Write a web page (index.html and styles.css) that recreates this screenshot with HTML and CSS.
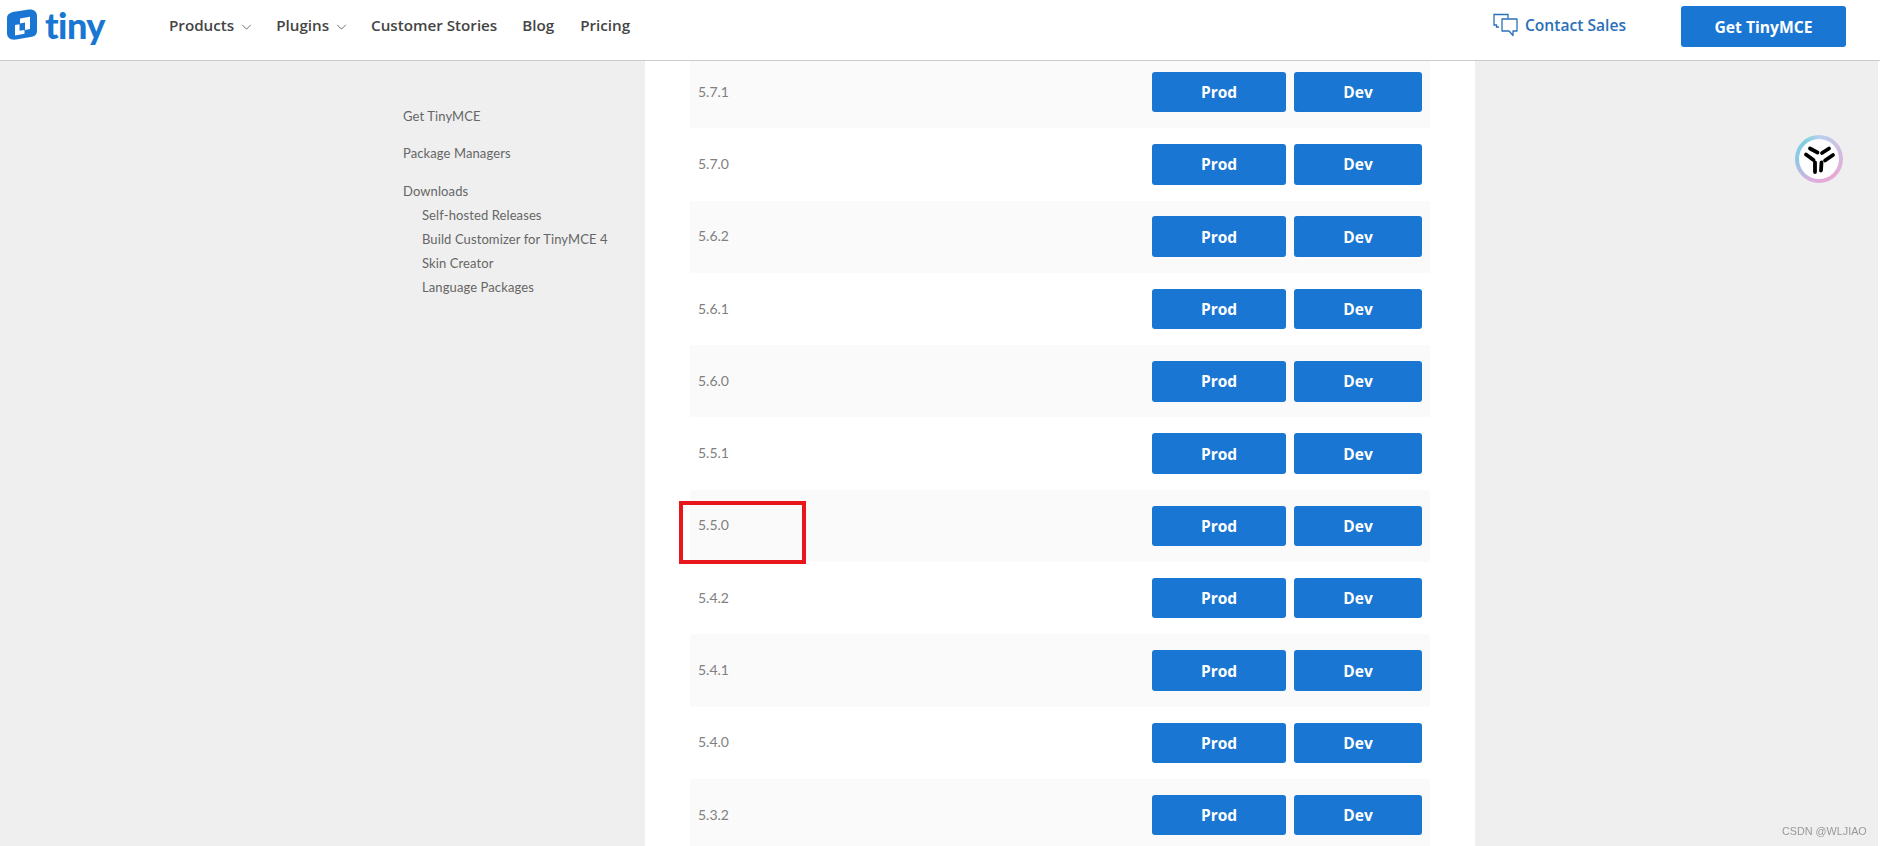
FILE: index.html
```html
<!DOCTYPE html>
<html lang="en">
<head>
  <meta charset="UTF-8" />
  <meta name="viewport" content="width=device-width, initial-scale=1.0" />
  <title>TinyMCE Downloads</title>
  <link rel="stylesheet" href="styles.css">
</head>
<body>
<header class="topbar">
  <a class="logo">
    <svg class="logo-mark" viewBox="0 0 30 31" width="30" height="31">
      <path d="M9 2.5 L22 .6 C26.5 0 30 2.5 30 7 L30 22 C30 25 28.5 27 25 27.8 L9 30.6 C3.5 31.4 0 28.5 0 24 L0 9 C0 5.5 3 3.3 9 2.5 Z" fill="#1976d2"/>
      <path d="M13 9.5 L23 7.8 L23 20 L18 20.9 L18 13.6 L13 14.5 Z" fill="#fff"/>
      <path d="M8 16 L12.5 15.2 L12.5 21.8 L17.5 21 L17.5 24.8 L8 26.4 Z" fill="#fff"/>
    </svg>
    <span class="logo-text">tiny</span>
  </a>
  <nav class="mainnav">
    <a class="nav-products">Products <svg class="caret" viewBox="0 0 12 7" width="11" height="6"><path d="M1 1 L6 6 L11 1" fill="none" stroke="#555" stroke-width="1"/></svg></a>
    <a class="nav-plugins">Plugins <svg class="caret" viewBox="0 0 12 7" width="11" height="6"><path d="M1 1 L6 6 L11 1" fill="none" stroke="#555" stroke-width="1"/></svg></a>
    <a>Customer Stories</a>
    <a class="nav-blog">Blog</a>
    <a class="nav-pricing">Pricing</a>
  </nav>
  <a class="contact">
    <svg viewBox="0 0 25 24" width="25" height="24">
      <path d="M6 14 L3.5 14 L3.5 12 L1 12 L1 1.5 L15 1.5 L15 5.5" fill="none" stroke="#2a70b8" stroke-width="1.3"/>
      <path d="M9 6 L24 6 L24 18 L20 18 L20 22.5 L16 18 L9 18 Z" fill="none" stroke="#2a70b8" stroke-width="1.3" stroke-linejoin="round"/>
    </svg>
    Contact Sales
  </a>
  <a class="get-btn">Get TinyMCE</a>
</header>

<div class="page">
  <aside class="sidebar">
    <a class="side-link">Get TinyMCE</a>
    <a class="side-link">Package Managers</a>
    <a class="side-link side-parent">Downloads</a>
    <a class="side-sub">Self-hosted Releases</a>
    <a class="side-sub">Build Customizer for TinyMCE 4</a>
    <a class="side-sub">Skin Creator</a>
    <a class="side-sub">Language Packages</a>
  </aside>

  <main class="content">
    <div class="row"><span class="ver">5.7.1</span><a class="btn btn-prod">Prod</a><a class="btn btn-dev">Dev</a></div>
    <div class="row"><span class="ver">5.7.0</span><a class="btn btn-prod">Prod</a><a class="btn btn-dev">Dev</a></div>
    <div class="row"><span class="ver">5.6.2</span><a class="btn btn-prod">Prod</a><a class="btn btn-dev">Dev</a></div>
    <div class="row"><span class="ver">5.6.1</span><a class="btn btn-prod">Prod</a><a class="btn btn-dev">Dev</a></div>
    <div class="row"><span class="ver">5.6.0</span><a class="btn btn-prod">Prod</a><a class="btn btn-dev">Dev</a></div>
    <div class="row"><span class="ver">5.5.1</span><a class="btn btn-prod">Prod</a><a class="btn btn-dev">Dev</a></div>
    <div class="row"><span class="ver">5.5.0</span><a class="btn btn-prod">Prod</a><a class="btn btn-dev">Dev</a><div class="red-box"></div></div>
    <div class="row"><span class="ver">5.4.2</span><a class="btn btn-prod">Prod</a><a class="btn btn-dev">Dev</a></div>
    <div class="row"><span class="ver">5.4.1</span><a class="btn btn-prod">Prod</a><a class="btn btn-dev">Dev</a></div>
    <div class="row"><span class="ver">5.4.0</span><a class="btn btn-prod">Prod</a><a class="btn btn-dev">Dev</a></div>
    <div class="row"><span class="ver">5.3.2</span><a class="btn btn-prod">Prod</a><a class="btn btn-dev">Dev</a></div>
  </main>

  <div class="rightcol"></div>
</div>

<div class="float-badge">
  <svg viewBox="0 0 36 36" width="36" height="36">
    <g fill="none" stroke="#000" stroke-width="3.8" stroke-linecap="round">
      <path d="M9 7.5 L16.5 11.5"/>
      <path d="M28 7.5 L21 12"/>
      <path d="M5 13.5 L12.5 19"/>
      <path d="M32 14 L24 19.5"/>
      <path d="M14 21.5 L14 31"/>
      <path d="M20.5 21.5 L20 29.5"/>
    </g>
  </svg>
</div>
<div class="watermark">CSDN @WLJIAO</div>
</body>
</html>
```

FILE: styles.css
```css
html, body {
  margin: 0;
  height: 846px;
  overflow: hidden;
  background: white;
}
body {
  font-family: "Lato", Arial, sans-serif;
  color: #555;
}
a {
  cursor: pointer;
}
.topbar {
  position: relative;
  z-index: 10;
  height: 60px;
  background: white;
  border-bottom: 1px solid #ccc;
  display: flex;
  align-items: center;
  padding-left: 7px;
  padding-right: 34px;
}
.logo {
  display: flex;
  align-items: center;
  gap: 8px;
  width: 162px;
}
.logo-mark {
  margin-top: -11px;
}
.logo-text {
  font-size: 36px;
  font-weight: 900;
  color: #1976d2;
  line-height: 40px;
  margin-top: -11px;
  letter-spacing: -0.5px;
}
.mainnav {
  display: flex;
  gap: 24px;
  font-family: "Open Sans", Arial, sans-serif;
  font-size: 15.2px;
  font-weight: 600;
  color: #444;
  margin-top: -10px;
}
.mainnav a {
  white-space: nowrap;
}
.nav-blog {
  margin-left: 1px;
}
.nav-pricing {
  margin-left: 2px;
}
.caret {
  margin-left: 3px;
  vertical-align: 1px;
}
.contact {
  margin-left: auto;
  display: flex;
  align-items: center;
  gap: 7px;
  font-family: "Open Sans", Arial, sans-serif;
  font-size: 15.6px;
  font-weight: 600;
  color: #2a70b8;
  margin-top: -11px;
  margin-right: 55px;
}
.get-btn {
  width: 165px;
  height: 41px;
  margin-top: -7px;
  background: #1976d2;
  color: white;
  border-radius: 3px;
  display: flex;
  align-items: center;
  justify-content: center;
  font-family: "Open Sans", Arial, sans-serif;
  font-size: 15.7px;
  font-weight: 700;
}
.page {
  display: flex;
  height: 785px;
  background: white;
}
.sidebar {
  width: 645px;
  box-sizing: border-box;
  background: #efefef;
  padding-left: 403px;
  padding-top: 45.5px;
  font-size: 13px;
  letter-spacing: 0.1px;
  color: #666;
}
.side-link {
  display: block;
  height: 37.5px;
  line-height: 18px;
}
.side-sub {
  display: block;
  height: 24px;
  line-height: 18px;
  padding-left: 19px;
}
.side-parent {
  height: 24px;
}
.content {
  width: 830px;
  box-sizing: border-box;
  padding: 0 45px;
  margin-top: -5px;
}
.rightcol {
  width: 403px;
  background: #efefef;
}
.row {
  position: relative;
  height: 72.3px;
  display: flex;
  align-items: center;
  padding: 0 8px 0 8px;
  box-sizing: border-box;
}
.row:nth-child(odd) {
  background: #fafafa;
}
.ver {
  margin-right: auto;
  font-size: 14px;
  color: #808080;
  position: relative;
  top: -1px;
}
.btn {
  height: 40.5px;
  background: #1976d2;
  color: white;
  border-radius: 3px;
  display: flex;
  align-items: center;
  justify-content: center;
  font-family: "Open Sans", Arial, sans-serif;
  font-size: 15.5px;
  font-weight: 700;
}
.btn-prod {
  width: 134px;
  margin-right: 8px;
}
.btn-dev {
  width: 128px;
}
.red-box {
  position: absolute;
  left: -11px;
  top: 11px;
  width: 127px;
  height: 63px;
  box-sizing: border-box;
  border: 4px solid #e8171c;
}
.float-badge {
  position: fixed;
  left: 1795px;
  top: 135px;
  width: 48px;
  height: 48px;
  border-radius: 50%;
  background: conic-gradient(#b9d0ec, #e9a8d4 40%, #dcaede 55%, #8fc8e6 75%, #7fd0e0 90%, #b9d0ec);
  display: flex;
  align-items: center;
  justify-content: center;
}
.float-badge::before {
  content: "";
  position: absolute;
  inset: 4px;
  border-radius: 50%;
  background: white;
}
.float-badge svg {
  position: relative;
}
.watermark {
  position: fixed;
  left: 1782px;
  top: 825px;
  font-family: "Liberation Sans", Arial, sans-serif;
  font-size: 10.8px;
  color: #999;
  white-space: nowrap;
}
```
